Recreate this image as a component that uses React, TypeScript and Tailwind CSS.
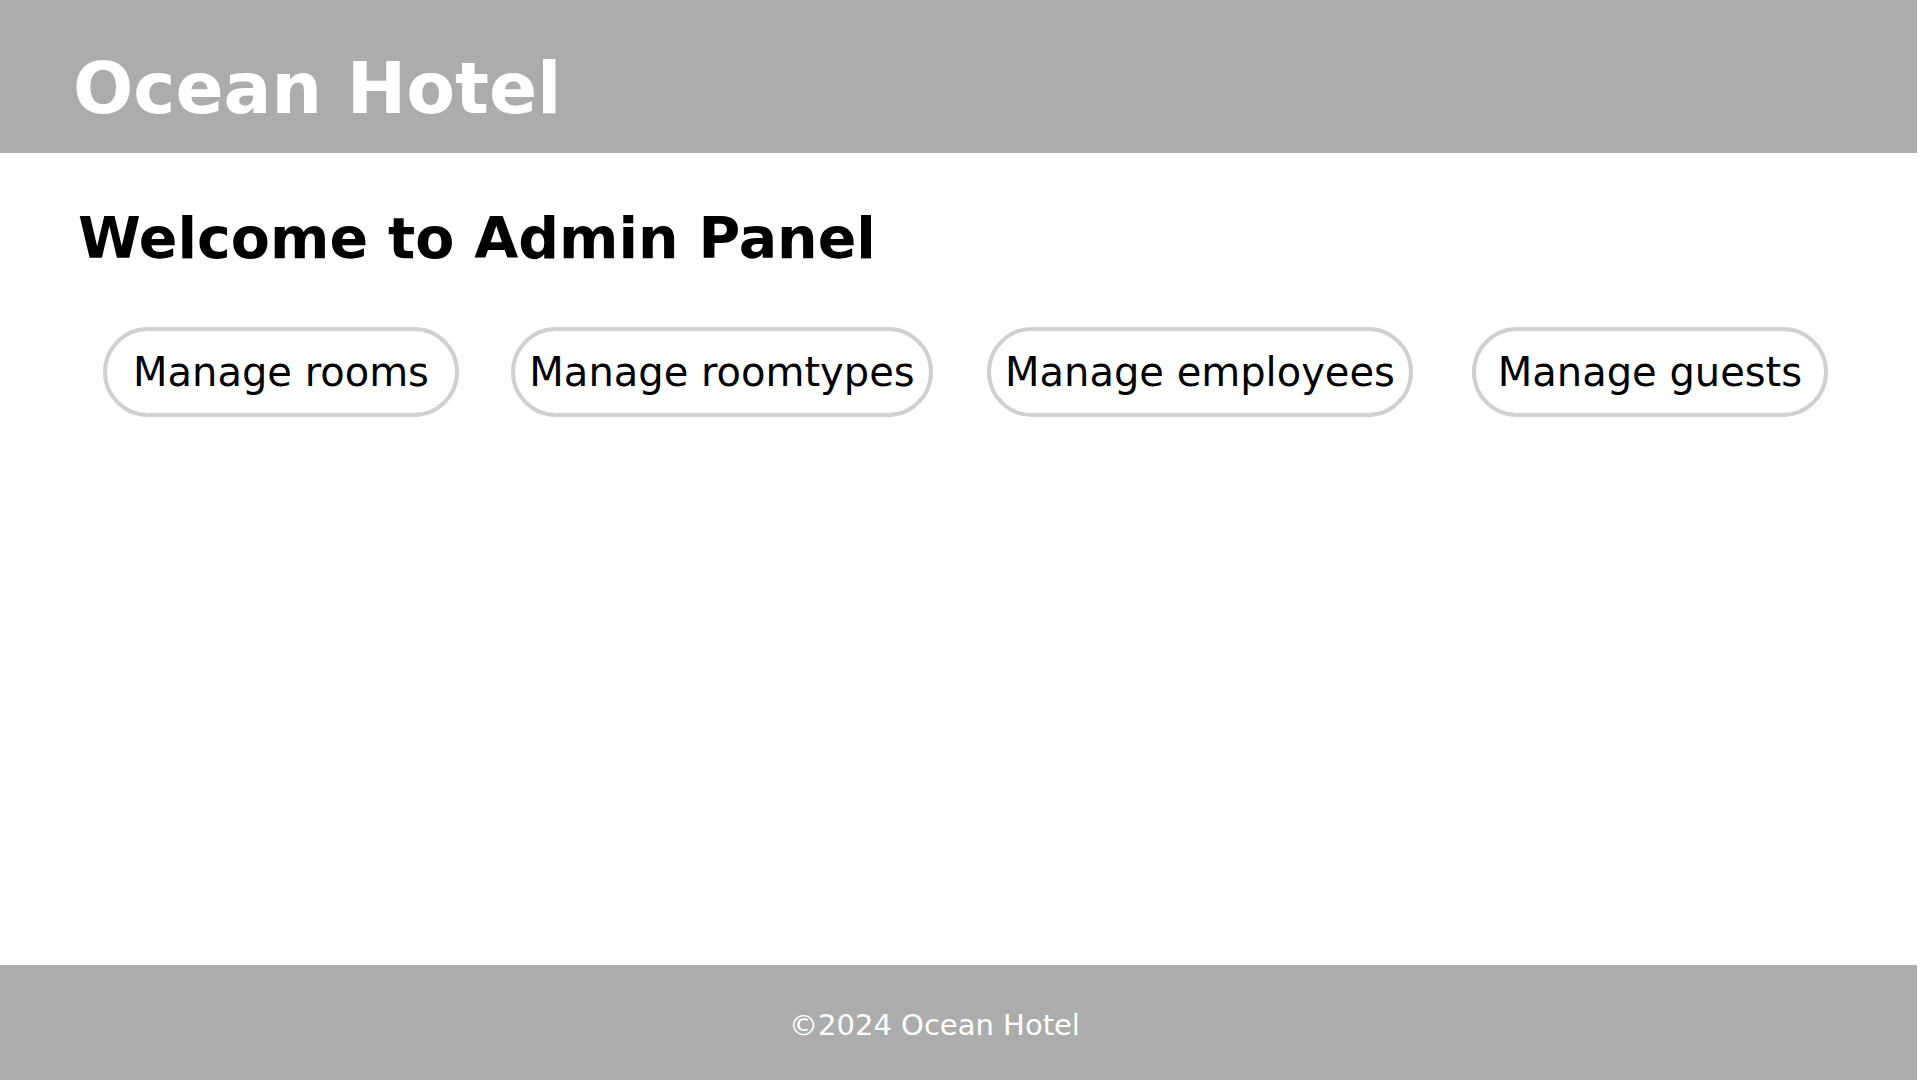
import React from "react";

const buttons = [
  { label: "Manage rooms", w: "w-[356px]", ml: "ml-[103px]" },
  { label: "Manage roomtypes", w: "w-[422px]", ml: "ml-[52px]" },
  { label: "Manage employees", w: "w-[426px]", ml: "ml-[54px]" },
  { label: "Manage guests", w: "w-[356px]", ml: "ml-[59px]" },
];

export default function App() {
  return (
    <div
      className="w-[1917px] h-[1080px] flex flex-col bg-white"
      style={{ fontFamily: '"DejaVu Sans", "Liberation Sans", sans-serif' }}
    >
      <header className="h-[153px] bg-[#acacac] pl-[73px] pt-[53px] shrink-0">
        <h1 className="text-[71px] leading-none font-bold text-white">Ocean Hotel</h1>
      </header>
      <main className="flex-1">
        <h2 className="mt-[57px] ml-[78px] text-[57px] leading-none font-bold text-black">
          Welcome to Admin Panel
        </h2>
        <div className="flex mt-[60px]">
          {buttons.map((b) => (
            <button
              key={b.label}
              className={`${b.w} ${b.ml} h-[90px] rounded-full border-4 border-[#d0d0d0] bg-white flex items-center justify-center text-[40px] leading-none text-black`}
            >
              {b.label}
            </button>
          ))}
        </div>
      </main>
      <footer className="h-[115px] bg-[#acacac] shrink-0 flex justify-center pr-[48px] pt-[46px]">
        <p className="text-[29px] leading-none text-white">©2024 Ocean Hotel</p>
      </footer>
    </div>
  );
}
